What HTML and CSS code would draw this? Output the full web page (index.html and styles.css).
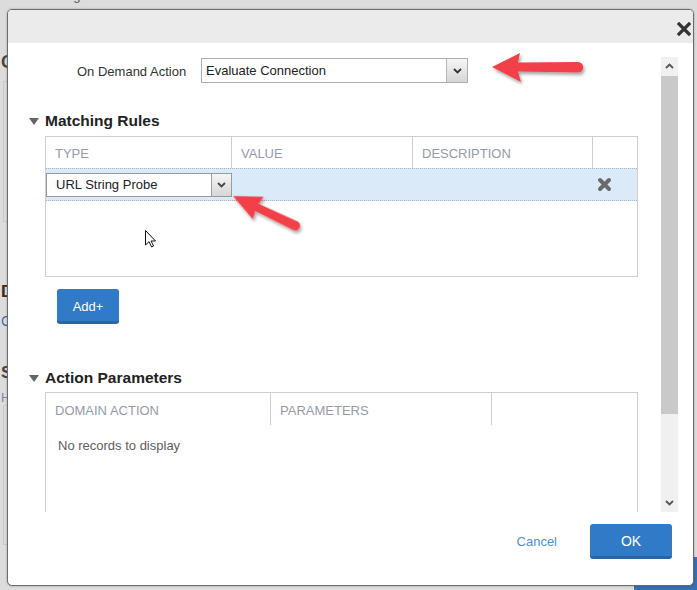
FILE: index.html
```html
<!DOCTYPE html>
<html>
<head>
<meta charset="utf-8">
<link rel="stylesheet" href="styles.css">
</head>
<body>
<div class="page">
  <div class="bg">
    <div class="bg-top">Settings</div>
    <div class="bg-c">C</div>
    <div class="bg-box"></div>
    <div class="bg-d">D</div>
    <div class="bg-c2">C</div>
    <div class="bg-s">S</div>
    <div class="bg-h">H</div>
    <div class="bg-box2"></div>
    <div class="bg-btn"></div>
  </div>

  <div class="dialog">
    <div class="titlebar">
      <svg class="close" width="14" height="14" viewBox="0 0 14 14"><path d="M2 2 L12 12 M12 2 L2 12" stroke="#333" stroke-width="3.2" stroke-linecap="square"/></svg>
    </div>
    <div class="body">
      <div class="content">
        <div class="action-row">
          <div class="label">On Demand Action</div>
          <div class="select select-main">
            <span class="select-text">Evaluate Connection</span>
            <span class="select-btn"><svg width="9" height="6" viewBox="0 0 9 6"><path d="M1 1 L4.5 4.5 L8 1" fill="none" stroke="#333" stroke-width="1.8"/></svg></span>
          </div>
        </div>

        <div class="heading heading-first"><span class="tri"></span>Matching Rules</div>
        <div class="table table-rules">
          <div class="thead rules-cols">
            <div class="th">TYPE</div>
            <div class="th">VALUE</div>
            <div class="th">DESCRIPTION</div>
            <div class="th"></div>
          </div>
          <div class="row-sel">
            <div class="select select-row">
              <span class="select-text">URL String Probe</span>
              <span class="select-btn"><svg width="9" height="6" viewBox="0 0 9 6"><path d="M1 1 L4.5 4.5 L8 1" fill="none" stroke="#444" stroke-width="1.8"/></svg></span>
            </div>
            <svg class="del" width="15" height="15" viewBox="0 0 15 15"><path d="M3 3 L12 12 M12 3 L3 12" stroke="#6a6a6a" stroke-width="4" stroke-linecap="round"/></svg>
          </div>
          <div class="empty"></div>
        </div>
        <button class="btn btn-add">Add+</button>

        <div class="heading heading-second"><span class="tri"></span>Action Parameters</div>
        <div class="table table-params">
          <div class="thead params-cols">
            <div class="th">DOMAIN ACTION</div>
            <div class="th">PARAMETERS</div>
            <div class="th"></div>
          </div>
          <div class="norec">No records to display</div>
        </div>
      </div>
      <div class="scrollbar">
        <div class="sb-arrow"><svg width="9" height="6" viewBox="0 0 9 6"><path d="M1 5 L4.5 1.5 L8 5" fill="none" stroke="#555" stroke-width="1.8"/></svg></div>
        <div class="sb-thumb"></div>
        <div class="sb-rest"></div>
        <div class="sb-arrow"><svg width="9" height="6" viewBox="0 0 9 6"><path d="M1 1 L4.5 4.5 L8 1" fill="none" stroke="#555" stroke-width="1.8"/></svg></div>
      </div>
    </div>
    <div class="footer">
      <a class="cancel">Cancel</a>
      <button class="btn btn-ok">OK</button>
    </div>
  </div>

  <svg class="overlay" width="697" height="590" viewBox="0 0 697 590">
    <defs>
      <filter id="sh" x="-20%" y="-40%" width="140%" height="180%">
        <feDropShadow dx="1.5" dy="2.5" stdDeviation="1.6" flood-color="#000" flood-opacity="0.35"/>
      </filter>
    </defs>
    <g filter="url(#sh)">
      <path d="M492 67 L520 53 L518 62.5 L578 62 A5 5 0 0 1 578 72.5 L518 71.5 L521 82 Z" fill="#f2414a"/>
      <path transform="translate(233,196) rotate(25.5)" d="M0 0 L28 -12.5 L26.5 -4 L69 -4.8 A4.8 4.8 0 0 1 69 4.8 L26.5 4 L28 12.5 Z" fill="#f2414a"/>
    </g>
    <path transform="translate(145,230)" d="M0.5 0.5 L0.5 15 L4 11.7 L6.6 17 L8.6 16 L6 11 L10.5 11 Z" fill="#fff" stroke="#111" stroke-width="1" stroke-linejoin="miter"/>
  </svg>
</div>
</body>
</html>
```

FILE: styles.css
```css
* { box-sizing: border-box; }
html, body { margin: 0; padding: 0; }
body {
  width: 697px;
  height: 590px;
  overflow: hidden;
  background: #dcdcdc;
  font-family: "Liberation Sans", Arial, sans-serif;
}
.page { position: relative; width: 697px; height: 590px; }

/* background page fragments */
.bg { display: flex; flex-direction: column; height: 590px; }
.bg-top { font-size: 13px; line-height: 14px; margin-top: -11px; padding-left: 40px; color: #555; }
.bg-c { margin-top: 49px; font-size: 18px; font-weight: bold; line-height: 20px; color: #444; padding-left: 1px; }
.bg-box { margin-top: 9px; margin-left: 3px; width: 60px; height: 141px; border: 1px solid #c8c8c8; }
.bg-d { margin-top: 61px; font-size: 17px; font-weight: bold; line-height: 18px; color: #4a2418; padding-left: 1px; }
.bg-c2 { margin-top: 12px; font-size: 14px; line-height: 16px; color: #3b6fb0; padding-left: 1px; }
.bg-s { margin-top: 35px; font-size: 17px; font-weight: bold; line-height: 18px; color: #444; padding-left: 1px; }
.bg-h { margin-top: 9px; font-size: 13px; line-height: 14px; color: #8a80a8; padding-left: 1px; }
.bg-box2 { margin-left: 3px; width: 60px; height: 140px; border: 1px solid #c8c8c8; }
.bg-btn { margin-top: 12px; margin-left: 634px; width: 63px; height: 33px; background: #3570b5; }

/* dialog */
.dialog {
  position: absolute;
  left: 7px;
  top: 9px;
  width: 687px;
  height: 577px;
  background: #fff;
  border: 1px solid #6b6b6b;
  border-radius: 5px;
  box-shadow: 0 0 2px rgba(0,0,0,0.35);
  display: flex;
  flex-direction: column;
  overflow: hidden;
}
.titlebar {
  height: 33px;
  flex: none;
  background: #ebebeb;
  display: flex;
  justify-content: flex-end;
  align-items: flex-start;
  padding-top: 12px;
  padding-right: 2px;
}
.body { height: 469px; flex: none; display: flex; }
.content { flex: 1; overflow: hidden; }
.scrollbar {
  width: 17px;
  height: 455px;
  margin: 14px 15px 0 0;
  background: #f0f0f0;
  display: flex;
  flex-direction: column;
}
.sb-arrow { height: 18px; display: flex; align-items: center; justify-content: center; flex: none; }
.sb-thumb { height: 338px; margin-top: 1px; background: #c9c9c9; flex: none; }
.sb-rest { flex: 1; }

.action-row { display: flex; align-items: center; margin-top: 15px; padding-left: 69px; }
.label { width: 113px; font-size: 13px; color: #333; text-align: left; margin-right: 11px; padding-top: 2px; }

.select {
  display: flex;
  align-items: center;
  background: #fff;
  font-size: 13px;
  color: #222;
}
.select-main { width: 267px; height: 25px; border: 1px solid #a9adb5; }
.select-row { width: 186px; height: 24px; border: 1px solid #9a9a9a; }
.select-text { flex: 1; padding-left: 4px; white-space: nowrap; }
.select-row .select-text { padding-left: 9px; }
.select-btn {
  width: 21px;
  height: 100%;
  border-left: 1px solid #b8b8b8;
  background: linear-gradient(#f6f6f6, #d6d6d6);
  display: flex;
  align-items: center;
  justify-content: center;
}
.select-row .select-btn { width: 20px; border-left-color: #a0a0a0; }

.heading {
  display: flex;
  align-items: center;
  height: 20px;
  padding-left: 21px;
  font-size: 15.5px;
  font-weight: bold;
  color: #222;
}
.heading-first { margin-top: 28px; }
.heading-second { margin-top: 44px; }
.tri {
  width: 0; height: 0;
  border-left: 5.5px solid transparent;
  border-right: 5.5px solid transparent;
  border-top: 7px solid #666;
  margin-right: 6px;
  margin-top: 1px;
}

.table { margin-left: 37px; width: 593px; border: 1px solid #cfcfcf; }
.table-rules { margin-top: 5px; }
.table-params { margin-top: 4px; height: 200px; border-bottom: none; }
.thead { display: grid; height: 31px; }
.rules-cols { grid-template-columns: 185px 181px 180px 1fr; }
.params-cols { grid-template-columns: 224px 221px 1fr; height: 32px; }
.th {
  font-size: 13px;
  color: #959ba6;
  padding-left: 9px;
  padding-top: 2px;
  display: flex;
  align-items: center;
  white-space: nowrap;
}
.th + .th { border-left: 1px solid #cfcfcf; }

.row-sel {
  height: 33px;
  background: #dbeaf8;
  border-top: 1px dotted #a8b0b8;
  border-bottom: 1px dotted #a8b0b8;
  display: flex;
  align-items: center;
}
.del { margin-left: auto; margin-right: 25px; }
.empty { height: 75px; }

.btn {
  font-family: "Liberation Sans", Arial, sans-serif;
  color: #fff;
  background: #317ac7;
  border: none;
  border-bottom: 3px solid #2b64a4;
  border-radius: 3px;
  padding: 0;
  padding-top: 2px;
  cursor: default;
}
.btn-add { display: block; margin-top: 12px; margin-left: 49px; width: 62px; height: 35px; font-size: 13px; }

.norec { margin-top: 13px; padding-left: 12px; font-size: 13px; line-height: 16px; color: #5e5e5e; }

.footer {
  flex: 1;
  display: flex;
  justify-content: flex-end;
  align-items: flex-start;
  padding-top: 12px;
  padding-right: 21px;
}
.cancel { font-size: 13px; color: #4d8fd6; line-height: 35px; margin-right: 33px; }
.btn-ok { width: 82px; height: 35px; font-size: 14px; }

.overlay { position: absolute; left: 0; top: 0; pointer-events: none; }
```
